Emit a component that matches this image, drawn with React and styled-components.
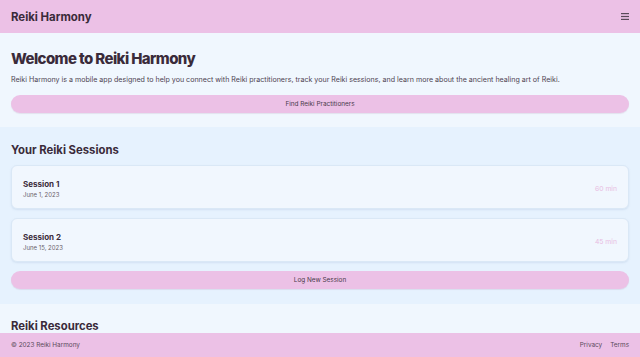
import React from "react";
import styled, { createGlobalStyle } from "styled-components";

const Global = createGlobalStyle`
  html, body { margin: 0; padding: 0; }
  body {
    font-family: Inter, "Noto Sans", sans-serif;
    background: #f0f7fe;
    color: #3a2b3a;
  }
  * { box-sizing: border-box; }
`;

const Page = styled.div`
  display: flex;
  flex-direction: column;
  min-height: 100vh;
  padding-bottom: 24px;
`;

const Header = styled.header`
  height: 33px;
  background: #ecc1e6;
  display: flex;
  align-items: center;
  justify-content: space-between;
  padding: 0 11px;
`;

const Brand = styled.div`
  font-size: 11.4px;
  font-weight: 700;
  color: #3a2b3a;
`;

const MenuButton = styled.button`
  border: 0;
  background: none;
  padding: 0;
  display: flex;
  color: #5a4a5a;
`;

const Section = styled.section`
  background: ${(p) => (p.$tint ? "#e6f2fe" : "#f0f7fe")};
  padding: ${(p) => p.$pad || "16px 11px 14px"};
  display: flex;
  flex-direction: column;
`;

const H1 = styled.h1`
  margin: 0;
  font-size: 15px;
  font-weight: 800;
  letter-spacing: -0.6px;
  line-height: 20px;
  color: #3a2b3a;
`;

const H2 = styled.h2`
  margin: 0;
  font-size: 11.3px;
  font-weight: 700;
  line-height: 16px;
  color: #3a2b3a;
`;

const Lead = styled.p`
  margin: 6px 0 10px;
  font-size: 7.1px;
  line-height: 10px;
  color: #4d4250;
`;

const PillButton = styled.button`
  width: 100%;
  height: 18px;
  border: 0;
  border-radius: 9px;
  background: #ecc1e6;
  font-family: inherit;
  font-size: 6.4px;
  color: #4a3a4a;
  box-shadow: 0 1px 1px rgba(150, 110, 150, 0.15);
`;

const Cards = styled.div`
  display: flex;
  flex-direction: column;
  gap: 9px;
  margin: 7px 0 9px;
`;

const Card = styled.div`
  height: 44px;
  background: #f1f7fe;
  border: 1px solid #dae8f6;
  border-radius: 6px;
  box-shadow: 0 1px 2px rgba(120, 150, 190, 0.18);
  display: flex;
  align-items: center;
  justify-content: space-between;
  padding: 3px 11px 0;
`;

const CardText = styled.div`
  display: flex;
  flex-direction: column;
  gap: 1px;
`;

const CardTitle = styled.div`
  font-size: 8px;
  font-weight: 700;
  line-height: 11px;
  color: #3a2b3a;
`;

const CardDate = styled.div`
  font-size: 6px;
  line-height: 8px;
  color: #6a5e6a;
`;

const Duration = styled.div`
  font-size: 6.8px;
  color: #e8bde2;
`;

const Footer = styled.footer`
  position: fixed;
  left: 0;
  right: 0;
  bottom: 0;
  height: 24px;
  background: #ecc1e6;
  display: flex;
  align-items: center;
  justify-content: space-between;
  padding: 0 11px;
  font-size: 6.4px;
  color: #5a4a5a;
`;

const FooterLinks = styled.nav`
  display: flex;
  gap: 8px;
`;

const sessions = [
  { title: "Session 1", date: "June 1, 2023", duration: "60 min" },
  { title: "Session 2", date: "June 15, 2023", duration: "45 min" },
];

export default function App() {
  return (
    <>
      <Global />
      <Page>
        <Header>
          <Brand>Reiki Harmony</Brand>
          <MenuButton aria-label="Menu">
            <svg width="8" height="7" viewBox="0 0 8 7">
              <rect x="0" y="0" width="8" height="1.2" fill="currentColor" />
              <rect x="0" y="2.9" width="8" height="1.2" fill="currentColor" />
              <rect x="0" y="5.8" width="8" height="1.2" fill="currentColor" />
            </svg>
          </MenuButton>
        </Header>
        <Section $pad="16px 11px 14px">
          <H1>Welcome to Reiki Harmony</H1>
          <Lead>
            Reiki Harmony is a mobile app designed to help you connect with Reiki practitioners,
            track your Reiki sessions, and learn more about the ancient healing art of Reiki.
          </Lead>
          <PillButton>Find Reiki Practitioners</PillButton>
        </Section>
        <Section $tint $pad="15px 11px 15px">
          <H2>Your Reiki Sessions</H2>
          <Cards>
            {sessions.map((s) => (
              <Card key={s.title}>
                <CardText>
                  <CardTitle>{s.title}</CardTitle>
                  <CardDate>{s.date}</CardDate>
                </CardText>
                <Duration>{s.duration}</Duration>
              </Card>
            ))}
          </Cards>
          <PillButton>Log New Session</PillButton>
        </Section>
        <Section $pad="14px 11px 40px">
          <H2>Reiki Resources</H2>
        </Section>
        <Footer>
          <span>© 2023 Reiki Harmony</span>
          <FooterLinks>
            <span>Privacy</span>
            <span>Terms</span>
          </FooterLinks>
        </Footer>
      </Page>
    </>
  );
}
